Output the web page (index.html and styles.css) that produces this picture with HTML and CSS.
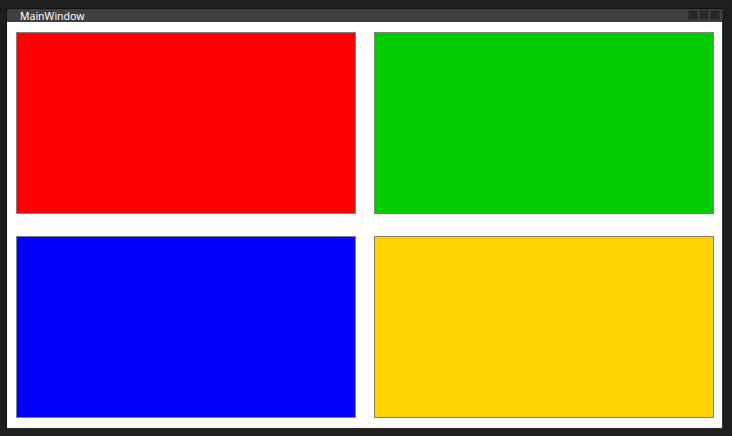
FILE: index.html
```html
<!DOCTYPE html>
<html>
<head>
<meta charset="utf-8">
<link rel="stylesheet" href="styles.css">
</head>
<body>
<div class="window">
  <div class="titlebar">
    <span class="title">MainWindow</span>
    <div class="buttons">
      <span class="btn"></span>
      <span class="btn"></span>
      <span class="btn"></span>
    </div>
  </div>
  <div class="content">
    <div class="panel red"></div>
    <div class="panel green"></div>
    <div class="panel blue"></div>
    <div class="panel yellow"></div>
  </div>
</div>
</body>
</html>
```
FILE: styles.css
```css
html, body {
  margin: 0;
  padding: 0;
  background: #1e1e1e;
  width: 732px;
  height: 436px;
  overflow: hidden;
}
.window {
  margin: 8px 0 0 6px;
  width: 715px;
  border: 1px solid #101010;
  border-right-color: #2e2e2e;
  border-bottom-color: #2e2e2e;
  display: flex;
  flex-direction: column;
}
.titlebar {
  height: 13px;
  background: #404040;
  display: flex;
  align-items: flex-start;
  justify-content: space-between;
}
.title {
  font-family: "Noto Sans", "Open Sans", sans-serif;
  font-size: 10.5px;
  line-height: 14px;
  color: #ffffff;
  margin-left: 13px;
}
.buttons {
  display: flex;
  gap: 1px;
  padding-top: 1px;
  margin-right: 2px;
}
.btn {
  width: 8px;
  height: 8px;
  background: #262626;
  border: 1px solid #333333;
}
.content {
  background: #ffffff;
  padding: 10px 8px 10px 9px;
  display: grid;
  grid-template-columns: 340px 340px;
  grid-template-rows: 182px 182px;
  column-gap: 18px;
  row-gap: 22px;
}
.panel {
  box-sizing: border-box;
  border: 1px solid #808080;
}
.red { background: #ff0000; }
.green { background: #00cc00; }
.blue { background: #0000ff; }
.yellow { background: #ffd200; }
```
